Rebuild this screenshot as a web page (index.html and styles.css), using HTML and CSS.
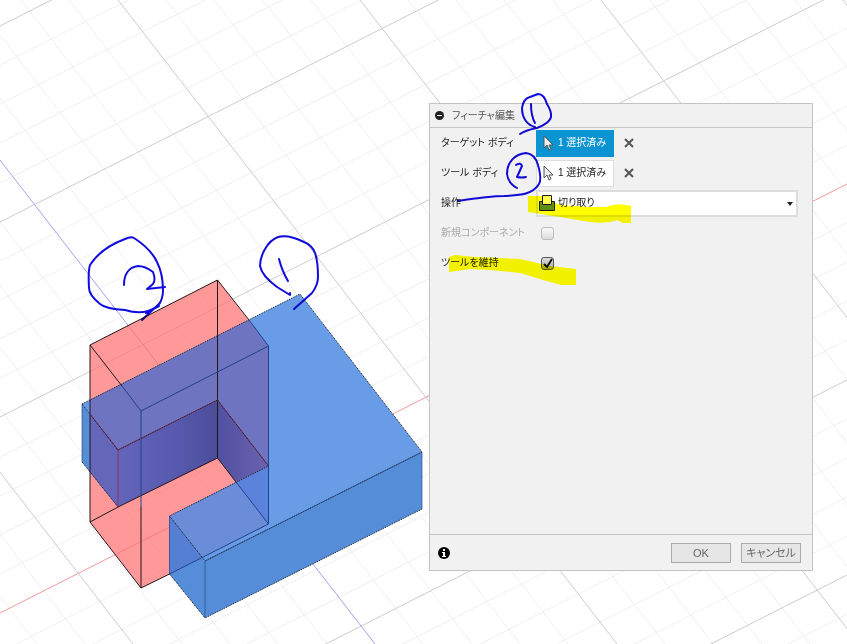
FILE: index.html
```
<!DOCTYPE html>
<html lang="ja">
<head>
<meta charset="utf-8">
<title>フィーチャ編集</title>
<link rel="stylesheet" href="styles.css">
</head>
<body>
<main class="stage">
  <svg class="viewport" viewBox="0 0 847 644" preserveAspectRatio="xMinYMin slice" aria-hidden="true">
    <path class="grid-minor" d="M0 65l847-429M0 104l847-429M0 143l847-429M0 183l847-429M0 261l847-429M0 300l847-429M0 339l847-429M0 378l847-429M0 457l847-429M0 496l847-429M0 535l847-429M0 574l847-429M0 652l847-429M0 691l847-429M0 730l847-429M0 769l847-429M0 848l847-429M0 887l847-429M0 926l847-429M0 965l847-429M0 1043l847-429"/>
    <path class="grid-minor" d="M-462 0l499 644M-414 0l499 644M-317 0l499 644M-269 0l499 644M-221 0l499 644M-172 0l499 644M-76 0l499 644M-27 0l499 644M21 0l499 644M69 0l499 644M166 0l499 644M214 0l499 644M263 0l499 644M311 0l499 644M408 0l499 644M456 0l499 644M504 0l499 644M553 0l499 644M650 0l499 644M698 0l499 644M746 0l499 644M795 0l499 644"/>
    <path class="grid-major" d="M0 26l847-429M0 222l847-429M0 417l847-429M0 809l847-429M0 1004l847-429M-366 0l499 644M118 0l499 644M360 0l499 644M601 0l499 644M843 0l499 644"/>
    <path class="axis-z" d="M-124 0L375 644"/>
    <path class="axis-x" d="M0 613L847 184"/>

    <defs>
      <linearGradient id="wall" x1="0" y1="0" x2="1" y2="0">
        <stop offset="0" stop-color="#6265ba"/><stop offset=".6" stop-color="#5659ad"/><stop offset="1" stop-color="#4b4c99"/>
      </linearGradient>
      <linearGradient id="wall-end" x1="0" y1="0" x2="1" y2="0">
        <stop offset="0" stop-color="#5050a0"/><stop offset="1" stop-color="#6c62b0"/>
      </linearGradient>
    </defs>
    <path class="tool" d="M217.500 280L268.500 346V524L141 588 90 522V345z"/>
    <path class="top" d="M82 404L300 294 422 452 205 561 169.500 516 268.500 466 217.500 400 118 450z"/>
    <path class="side" d="M82 404L118 450V507L82 462zM169.500 516L205 561 422 452V509L205 618 169.500 574z"/>
    <path fill="#6e74c0" d="M90 400L249 320 268.500 346V466L217.500 400 118 450 90 414z"/>
    <path fill="#6466b9" d="M90 414L118 450V507L90 472z"/>
    <path fill="url(#wall)" d="M118 450L217.500 400V458L118 507z"/>
    <path fill="url(#wall-end)" d="M217.500 400L268.500 466 236 482 217.500 458z"/>
    <path fill="#6b8cd6" d="M169.500 516L236 482 268.500 524 202 557z"/>
    <path fill="#5b83dc" d="M236 482L268.500 466V524z"/>
    <path fill="#547fd3" d="M169.500 516L202 557 169.500 574z"/>

    <path class="edge" d="M90 522V345L217.500 280 249 320M90 345L122 386M217.500 280V458M90 522L141 588 169.500 574M90 522L118 507 217.500 458 236 482M141 507V588"/>
    <path class="edge-inside" d="M122 386L141 411 268.500 346 249 320M141 411V507M268.500 346V524L169.500 574M236 482L268.500 524"/>
    <path class="edge-red" d="M90 414L118 450 217.500 400 268.500 466M118 450V507"/>
    <path class="edge-dotted" d="M82 404L300 294 422 452 205 561 169.500 516 268.500 466M82 404L118 450 217.500 400 268.500 466M82 462L118 507M169.500 574L205 618 422 509"/>
    <path class="edge-thin" d="M205 561V618M422 452V509M169.500 516V574M82 404V462M205 561L422 452"/>
  </svg>

  <form class="dialog" aria-labelledby="dialog-title">
    <header class="dialog-header">
      <svg class="collapse" viewBox="0 0 9 9" aria-hidden="true"><circle cx="4.500" cy="4.500" r="4.500" fill="#222"/><path d="M2 4.500h5" stroke="#fff"/></svg>
      <h1 id="dialog-title">フィーチャ編集</h1>
    </header>

    <div class="fields">
      <div class="row">
        <label for="target">ターゲット ボディ</label>
        <div class="picker">
          <button class="selection active" type="button" id="target">
            <svg class="cursor" viewBox="0 0 11 16" aria-hidden="true"><path d="M1 1v12l3-3 2 5 2-1-2-4h4z"/></svg>1 選択済み
          </button>
          <button class="clear" type="button" aria-label="クリア"><svg viewBox="0 0 10 10" aria-hidden="true"><path d="M1 1l8 8M9 1L1 9"/></svg></button>
        </div>
      </div>
      <div class="row">
        <label for="tool">ツール ボディ</label>
        <div class="picker">
          <button class="selection" type="button" id="tool">
            <svg class="cursor" viewBox="0 0 11 16" aria-hidden="true"><path d="M1 1v12l3-3 2 5 2-1-2-4h4z"/></svg>1 選択済み
          </button>
          <button class="clear" type="button" aria-label="クリア"><svg viewBox="0 0 10 10" aria-hidden="true"><path d="M1 1l8 8M9 1L1 9"/></svg></button>
        </div>
      </div>
      <div class="row">
        <label for="operation">操作</label>
        <div class="combo">
          <select id="operation"><option>切り取り</option></select>
          <svg class="combo-arrow" viewBox="0 0 6 4" aria-hidden="true"><path d="M0 0h6L3 4z" fill="#222"/></svg>
        </div>
      </div>
      <div class="row disabled">
        <label for="component">新規コンポーネント</label>
        <input type="checkbox" id="component" disabled>
      </div>
      <div class="row">
        <label for="keep">ツールを維持</label>
        <span class="check"><input type="checkbox" id="keep" checked><svg viewBox="0 0 13 13" aria-hidden="true"><path d="M3 7l3 3 5-8"/></svg></span>
      </div>
    </div>

    <footer class="dialog-footer">
      <svg class="info" viewBox="0 0 12 12" aria-hidden="true"><circle cx="6" cy="6" r="6"/><path d="M5 2h2v2H5zM4 5h3v4h1v1H4V9h1V6H4z" fill="#fff"/></svg>
      <button class="action" type="button">OK</button>
      <button class="action" type="button">キャンセル</button>
    </footer>
  </form>

  <svg class="markup" viewBox="0 0 847 644" preserveAspectRatio="xMinYMin slice" aria-hidden="true">
    <path class="marker" d="M528 196H541L560 205 590 207 606 207Q618 202 631 206V223H623L617 220Q606 224 590 222L560 217 528 212z"/>
    <path class="marker" d="M449 257L455 255 475 257 500 258 520 259 550 266 576 269V285H561L540 279 520 273 490 270 470 269 449 272z"/>
    <g class="op-icon">
      <path d="M539.500 201.500h15v9h-15z" fill="#5f8f16"/>
      <path d="M542.500 195.500h9v9h-9z" fill="#ffff50"/>
    </g>
    <g class="pen">
      <path d="M134 238Q131 236 125 239C109 245 97 254 90 265Q88 271 89 288Q89 295 100 304Q106 309 125 310Q138 314 148 311C157 308 163 303 163 290Q163 274 157 262Q151 249 134 238M160 303L142 320M159 306L146 313"/>
      <path d="M124 285C124 273 130 267 138 266Q145 266 153 272Q156 280 153 284L147 289 165 287"/>
      <path d="M294 309L312 293Q318 285 318 277Q318 261 315 253Q312 245 304 242Q288 234 278 237C267 241 260 256 260 266Q262 276 277 287L290 295V293"/>
      <path d="M279 259Q282 271 288 281"/>
      <path d="M520 134Q526 130 537 128Q550 123 551 117Q552 112 547 104Q544 94 538 94L530 97Q523 99 522 108C522 118 527 125 535 127"/>
      <path d="M531 104Q531 116 535 123"/>
      <path d="M517 188Q508 183 507 174C507 162 515 154 526 153Q535 154 538 165Q542 179 539 184C532 196 515 195 504 196Q490 196 458 201"/>
      <path d="M516 165Q521 162 522 166L517 177Q522 178 526 177"/>
    </g>
  </svg>
</main>
</body>
</html>
```
FILE: styles.css
```
* { box-sizing: border-box; }

body {
  margin: 0;
  background: #fff;
  color: #222;
  font: 10px/16px "Liberation Sans", "Noto Sans CJK JP", sans-serif;
  font-feature-settings: "palt";
}

.stage {
  position: relative;
  min-height: 100vh;
  overflow: hidden;
}

.viewport, .markup {
  position: absolute;
  inset: 0;
  width: 100%;
  height: 100%;
}

.markup { pointer-events: none; }
.markup, .marker { mix-blend-mode: multiply; }

.viewport path { stroke-width: 1; }
.grid-minor { stroke: #efefef; }
.grid-major { stroke: #ccc; }
.axis-z { stroke: #a3a0f0; }
.axis-x { stroke: #f29a9a; }
.tool { fill: #ff7070; fill-opacity: .72; }
.top { fill: #699ce6; }
.side { fill: #568dd8; }
.edge, .edge-inside, .edge-red, .edge-dotted, .edge-thin { fill: none; }
.edge { stroke: #241418; }
.edge-inside { stroke: #1f428f; }
.edge-red { stroke: #8d345e; }
.edge-dotted { stroke: #10141c; stroke-dasharray: 1 1; }
.edge-thin { stroke: #1c3f73; stroke-opacity: .6; }

.marker { fill: #ff0; }
.op-icon { stroke: #1a1a1a; }
.pen {
  fill: none;
  stroke: #120be0;
  stroke-width: 2;
  stroke-linecap: round;
  stroke-linejoin: round;
}

.dialog {
  position: absolute;
  top: 103px;
  right: 34px;
  display: flex;
  flex-direction: column;
  width: 384px;
  min-height: 468px;
  border: 1px solid #c4c4c4;
  background: #f1f1f1;
}

.dialog-header {
  display: flex;
  align-items: center;
  gap: 8px;
  height: 24px;
  padding: 0 5px;
  border-bottom: 1px solid #c4c4c4;
}

.collapse { width: 9px; height: 9px; }

h1 {
  margin: 0;
  color: #555;
  font-size: 10px;
  font-weight: 400;
}

.fields { flex: 1; }

.row {
  display: grid;
  grid-template-columns: 95px 1fr;
  align-items: center;
  height: 30px;
  padding: 0 14px 0 11px;
}

.disabled { color: #aaa; }

.picker { display: flex; align-items: center; gap: 10px; }

button, select {
  margin: 0;
  color: inherit;
  font: inherit;
  font-feature-settings: inherit;
}

.selection {
  display: flex;
  align-items: center;
  gap: 4px;
  width: 78px;
  height: 27px;
  padding: 0 0 0 6px;
  border: 1px solid #ddd;
  background: #fff;
  white-space: nowrap;
}

.selection.active {
  border-color: #0c94d2;
  background: #0c94d2;
  color: #fff;
}

.cursor { width: 11px; height: 16px; flex: none; }
.cursor path { fill: #eee; stroke: #555; }

.clear {
  width: 10px;
  height: 10px;
  padding: 0;
  border: 0;
  background: none;
}
.clear svg { display: block; width: 10px; height: 10px; }
.clear path { stroke: #555; stroke-width: 2; }

.combo { position: relative; }

select {
  display: block;
  width: 100%;
  height: 27px;
  padding: 0 20px 0 20px;
  border: 2px solid #ddd;
  border-radius: 0;
  background: #fff;
  appearance: none;
}

.combo-arrow {
  position: absolute;
  top: 12px;
  right: 5px;
  width: 6px;
  height: 4px;
  pointer-events: none;
}

input {
  display: block;
  width: 13px;
  height: 13px;
  margin: 0 0 0 5px;
  border: 1px solid #999;
  border-radius: 3px;
  background: linear-gradient(#fafafa, #ddd);
  appearance: none;
}

input:disabled { border-color: #bbb; }
input:checked { border-color: #555; background: linear-gradient(#ddd, #aaa); }

.check { position: relative; }
.check svg {
  position: absolute;
  top: 0;
  left: 5px;
  width: 13px;
  height: 13px;
  pointer-events: none;
}
.check path { fill: none; stroke: #111; stroke-width: 2; }

.dialog-footer {
  display: flex;
  align-items: center;
  gap: 10px;
  height: 36px;
  padding: 0 11px 0 8px;
  border-top: 1px solid #c4c4c4;
}

.info { width: 12px; height: 12px; margin-right: auto; }

.action {
  width: 60px;
  height: 20px;
  padding: 0;
  border: 1px solid #aaa;
  background: #e6e6e6;
  color: #666;
  font-size: 11px;
}
```
